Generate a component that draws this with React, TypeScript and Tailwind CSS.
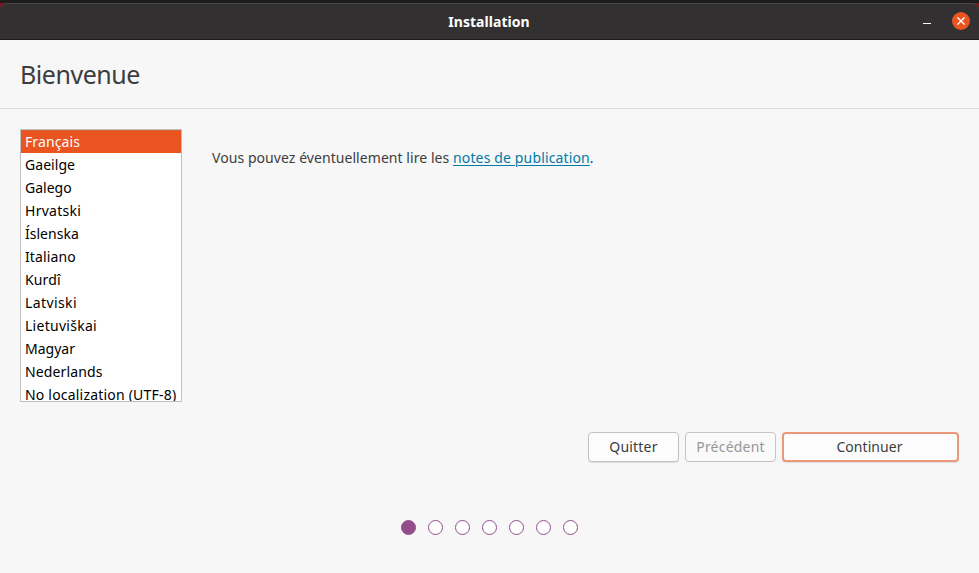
type Language = { name: string; tracking: string };

const languages: Language[] = [
  { name: "Français", tracking: "tracking-[0.1px]" },
  { name: "Gaeilge", tracking: "tracking-[0.05px]" },
  { name: "Galego", tracking: "tracking-[0px]" },
  { name: "Hrvatski", tracking: "tracking-[0.28px]" },
  { name: "Íslenska", tracking: "tracking-[0.02px]" },
  { name: "Italiano", tracking: "tracking-[0.12px]" },
  { name: "Kurdî", tracking: "tracking-[0.15px]" },
  { name: "Latviski", tracking: "tracking-[0.4px]" },
  { name: "Lietuviškai", tracking: "tracking-[0.28px]" },
  { name: "Magyar", tracking: "tracking-[0px]" },
  { name: "Nederlands", tracking: "tracking-[0.12px]" },
  { name: "No localization (UTF-8)", tracking: "tracking-[0.2px]" },
];

function TitleBar() {
  return (
    <header className="bg-[#7c1520] pt-[3px] shadow-[inset_0_3px_0_#1d1d1d]">
      <div className="grid h-[37px] grid-cols-[1fr_auto_1fr] items-center rounded-t-[7px] border-t border-b border-t-[#484747] border-b-[#1c1b1b] bg-[#323030] pr-[9px]">
        <span />
        <h1 className="pl-[8px] text-[14px] leading-5 font-bold tracking-[0.05px] text-white">Installation</h1>
        <div className="flex items-center justify-end gap-[21px]">
          <span className="mt-[4px] h-px w-2 bg-white" />
          <button aria-label="Fermer" className="mb-px flex size-[18px] items-center justify-center rounded-full bg-[#e95420]">
            <svg viewBox="0 0 8 8" className="size-2" fill="none" stroke="white" strokeWidth="1.35">
              <path d="M.4.4 7.6 7.6M7.6.4.4 7.6" />
            </svg>
          </button>
        </div>
      </div>
    </header>
  );
}

function LanguageList() {
  return (
    <ul className="h-[273px] w-[162px] shrink-0 overflow-hidden border border-[#bfbfbf] bg-white text-black">
      {languages.map(({ name, tracking }, i) => (
        <li
          key={name}
          className={`pl-1 whitespace-nowrap ${
            i === languages.length - 1 ? "h-[18px] leading-[23px]" : "h-[23px] leading-[23px]"
          } ${tracking} ${i === 0 ? "bg-[#e95420] text-white shadow-[inset_0_1px_0_#d96338]" : ""}`}
        >
          {name}
        </li>
      ))}
    </ul>
  );
}

function Steps() {
  return (
    <div className="mt-[58px] flex justify-center gap-3">
      {Array.from({ length: 7 }, (_, i) => (
        <span
          key={i}
          className={`size-[15px] rounded-full border border-[#924d8b] ${i === 0 ? "bg-[#924d8b]" : "bg-white"}`}
        />
      ))}
    </div>
  );
}

export default function App() {
  return (
    <div className="h-[573px] w-[979px] overflow-hidden bg-[#f7f7f7] font-['Noto_Sans','Open_Sans',sans-serif] text-[14px] text-[#3d3d3d]">
      <TitleBar />
      <div className="flex h-[69px] items-center border-b border-[#dcdcdc] pl-5">
        <h2 className="text-[25px] leading-8 tracking-[-0.45px]">Bienvenue</h2>
      </div>
      <main className="flex gap-[30px] px-5 pt-5">
        <LanguageList />
        <p className="pt-[18px] leading-[22px]">
          <span className="tracking-[0.06px]">Vous pouvez éventuellement lire les </span>
          <a href="#" className="tracking-[0.14px] text-[#007aa6] underline decoration-1 underline-offset-2">notes de publication</a>.
        </p>
      </main>
      <div className="mt-[30px] flex justify-end gap-[6px] pr-5">
        <button className="h-[30px] w-[91px] rounded-[4px] border border-[#c2c2c2] bg-[#fcfcfc] pb-[2px] tracking-[0.2px] shadow-[0_1px_1px_#00000018]">Quitter</button>
        <button disabled className="h-[30px] w-[91px] rounded-[4px] border border-[#c4c4c4] bg-[#fafafa] pb-[2px] tracking-[0.2px] text-[#979797]">Précédent</button>
        <button className="h-[30px] w-[177px] rounded-[4px] border-2 border-[#eb987a] bg-[#fcfcfc] pr-[2px] pb-[2px] tracking-[0.05px] shadow-[0_1px_1px_#00000018]">Continuer</button>
      </div>
      <Steps />
    </div>
  );
}
